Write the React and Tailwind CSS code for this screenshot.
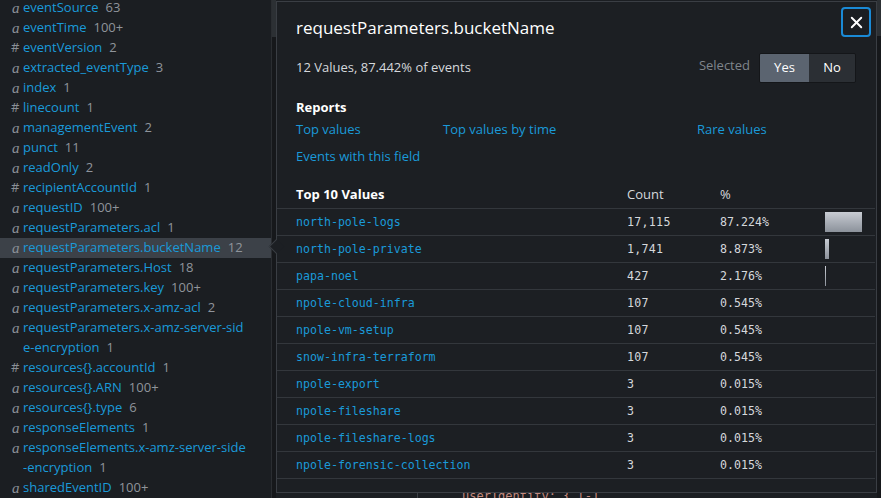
import React from 'react';
import { X } from 'lucide-react';

const fields = [
  { t: 'a', name: 'eventSource', count: '63' },
  { t: 'a', name: 'eventTime', count: '100+' },
  { t: '#', name: 'eventVersion', count: '2' },
  { t: 'a', name: 'extracted_eventType', count: '3' },
  { t: 'a', name: 'index', count: '1' },
  { t: '#', name: 'linecount', count: '1' },
  { t: 'a', name: 'managementEvent', count: '2' },
  { t: 'a', name: 'punct', count: '11' },
  { t: 'a', name: 'readOnly', count: '2' },
  { t: '#', name: 'recipientAccountId', count: '1' },
  { t: 'a', name: 'requestID', count: '100+' },
  { t: 'a', name: 'requestParameters.acl', count: '1' },
  { t: 'a', name: 'requestParameters.bucketName', count: '12', selected: true },
  { t: 'a', name: 'requestParameters.Host', count: '18' },
  { t: 'a', name: 'requestParameters.key', count: '100+' },
  { t: 'a', name: 'requestParameters.x-amz-acl', count: '2' },
  { t: 'a', name: 'requestParameters.x-amz-server-sid', rest: 'e-encryption', count: '1' },
  { t: '#', name: 'resources{}.accountId', count: '1' },
  { t: 'a', name: 'resources{}.ARN', count: '100+' },
  { t: 'a', name: 'resources{}.type', count: '6' },
  { t: 'a', name: 'responseElements', count: '1' },
  { t: 'a', name: 'responseElements.x-amz-server-side', rest: '-encryption', count: '1' },
  { t: 'a', name: 'sharedEventID', count: '100+' },
];

const values = [
  { v: 'north-pole-logs', c: '17,115', p: 87.224 },
  { v: 'north-pole-private', c: '1,741', p: 8.873 },
  { v: 'papa-noel', c: '427', p: 2.176 },
  { v: 'npole-cloud-infra', c: '107', p: 0.545 },
  { v: 'npole-vm-setup', c: '107', p: 0.545 },
  { v: 'snow-infra-terraform', c: '107', p: 0.545 },
  { v: 'npole-export', c: '3', p: 0.015 },
  { v: 'npole-fileshare', c: '3', p: 0.015 },
  { v: 'npole-fileshare-logs', c: '3', p: 0.015 },
  { v: 'npole-forensic-collection', c: '3', p: 0.015 },
];

const sans = "font-['Open_Sans',sans-serif]";
const mono = "font-['DejaVu_Sans_Mono',monospace]";

function TypeIcon({ t }) {
  return t === '#' ? (
    <span className="w-[12px] text-[13px] text-[#8b9097] not-italic">#</span>
  ) : (
    <span className="w-[12px] pl-[1px] font-['Liberation_Serif',serif] italic text-[15px] text-[#8b9097]">a</span>
  );
}

// Left field list
function FieldList() {
  return (
    <div className="w-[271px] shrink-0 bg-[#1b1e22] -mt-[2px] overflow-hidden">
      {fields.map((f) => (
        <div key={f.name} className={`pl-[11px] pr-2 ${f.selected ? 'bg-[#3c4148]' : ''}`}>
          <div className="flex items-center h-[20px]">
            <TypeIcon t={f.t} />
            <span className="text-[#1a9ad9]">{f.name}</span>
            {!f.rest && <span className="ml-[7px] text-[#8f949b]">{f.count}</span>}
          </div>
          {f.rest && (
            <div className="flex items-center h-[20px] pl-[12px]">
              <span className="text-[#1a9ad9]">{f.rest}</span>
              <span className="ml-[7px] text-[#8f949b]">{f.count}</span>
            </div>
          )}
        </div>
      ))}
    </div>
  );
}

function FieldSummary() {
  return (
    <div className="absolute left-0 top-[1px] w-[601px] h-[492px] bg-[#1c1f23] border border-[#3a3e44] flex flex-col">
      {/* popover arrow */}
      <div className="absolute -left-[6px] top-[239px] w-[11px] h-[11px] rotate-45 bg-[#1c1f23] border-l border-b border-[#3a3e44]" />

      <button className="absolute right-[5px] top-[5px] w-[30px] h-[30px] rounded-[4px] border-2 border-[#1a8ad6] bg-[#1b1e22] flex items-center justify-center text-white">
        <X className="w-[19px] h-[19px]" strokeWidth={2.4} />
      </button>

      <div className="pl-[19px] pt-[14px]">
        <h2 className="h-[24px] leading-[24px] text-[17px] text-white">requestParameters.bucketName</h2>

        <div className="mt-[13px] flex items-center h-[30px] pr-[20px]">
          <span className="text-[13px] text-[#d5d8dc]">12 Values, 87.442% of events</span>
          <span className="ml-auto mr-[9px] -mt-[5px] text-[13px] text-[#7f858c]">Selected</span>
          <div className="flex h-[30px] rounded-[2px] overflow-hidden border border-[#141619]">
            <span className="w-[49px] flex items-center justify-center bg-[#5b6470] text-white text-[13px]">Yes</span>
            <span className="w-[46px] flex items-center justify-center bg-[#2b2f34] text-white text-[13px]">No</span>
          </div>
        </div>

        <div className="mt-[14px] h-[20px] leading-[20px] text-[13px] font-bold text-white">Reports</div>
        <div className="mt-[3px] flex h-[20px] items-center text-[13px] text-[#1a9ad9]">
          <span className="w-[147px]">Top values</span>
          <span className="w-[254px]">Top values by time</span>
          <span>Rare values</span>
        </div>
        <div className="mt-[6px] h-[20px] leading-[20px] text-[13px] text-[#1a9ad9]">Events with this field</div>
      </div>

      <div className="mt-[16px] mr-[1px]">
        <div className="flex items-center h-[26px] pl-[19px] text-[13px]">
          <span className="w-[331px] font-bold text-white">Top 10 Values</span>
          <span className="w-[93px] text-[#d5d8dc]">Count</span>
          <span className="text-[#d5d8dc]">%</span>
        </div>
        {values.map((r) => (
          <div key={r.v} className="flex items-center h-[27px] border-t border-[#33373c] pl-[19px] pt-[2px] text-[11.6px]">
            <span className={`w-[331px] ${mono} text-[#1a9ad9]`}>{r.v}</span>
            <span className={`w-[93px] ${mono} tracking-[0.3px] text-[#d5d8dc]`}>{r.c}</span>
            <span className={`w-[105px] ${mono} text-[#d5d8dc]`}>{r.p.toFixed(3)}%</span>
            <span
              className="h-[20px] -mt-[2px] bg-gradient-to-b from-[#c8ccd3] to-[#8c929b]"
              style={{ width: Math.round((r.p * 42.4) / 100) }}
            />
          </div>
        ))}
        <div className="border-t border-[#33373c]" />
      </div>
    </div>
  );
}

export default function App() {
  return (
    <div className={`w-[881px] h-[498px] overflow-hidden flex bg-[#1b1e22] text-[13px] ${sans}`}>
      <FieldList />
      {/* scrollbar */}
      <div className="w-[5px] shrink-0 flex flex-col border-l border-[#2a2d31] bg-[#16181b]">
        <div className="h-[37px] bg-[#2c3034]" />
      </div>
      <div className="relative flex-1 bg-[#1b1e22]">
        <div className="flex pt-[490px] pl-[141px]">
          <div className="border-l border-[#3a3e44] h-[8px]" />
          <span className={`ml-[44px] ${mono} text-[12px] leading-[12px] text-[#c48a7e]`}>userIdentity: {'{'} [-]</span>
        </div>
        <FieldSummary />
        <div className="absolute right-0 top-0 w-[4px] h-full bg-[#16181b]">
          <div className="h-[36px] bg-[#2c3034]" />
        </div>
      </div>
    </div>
  );
}
